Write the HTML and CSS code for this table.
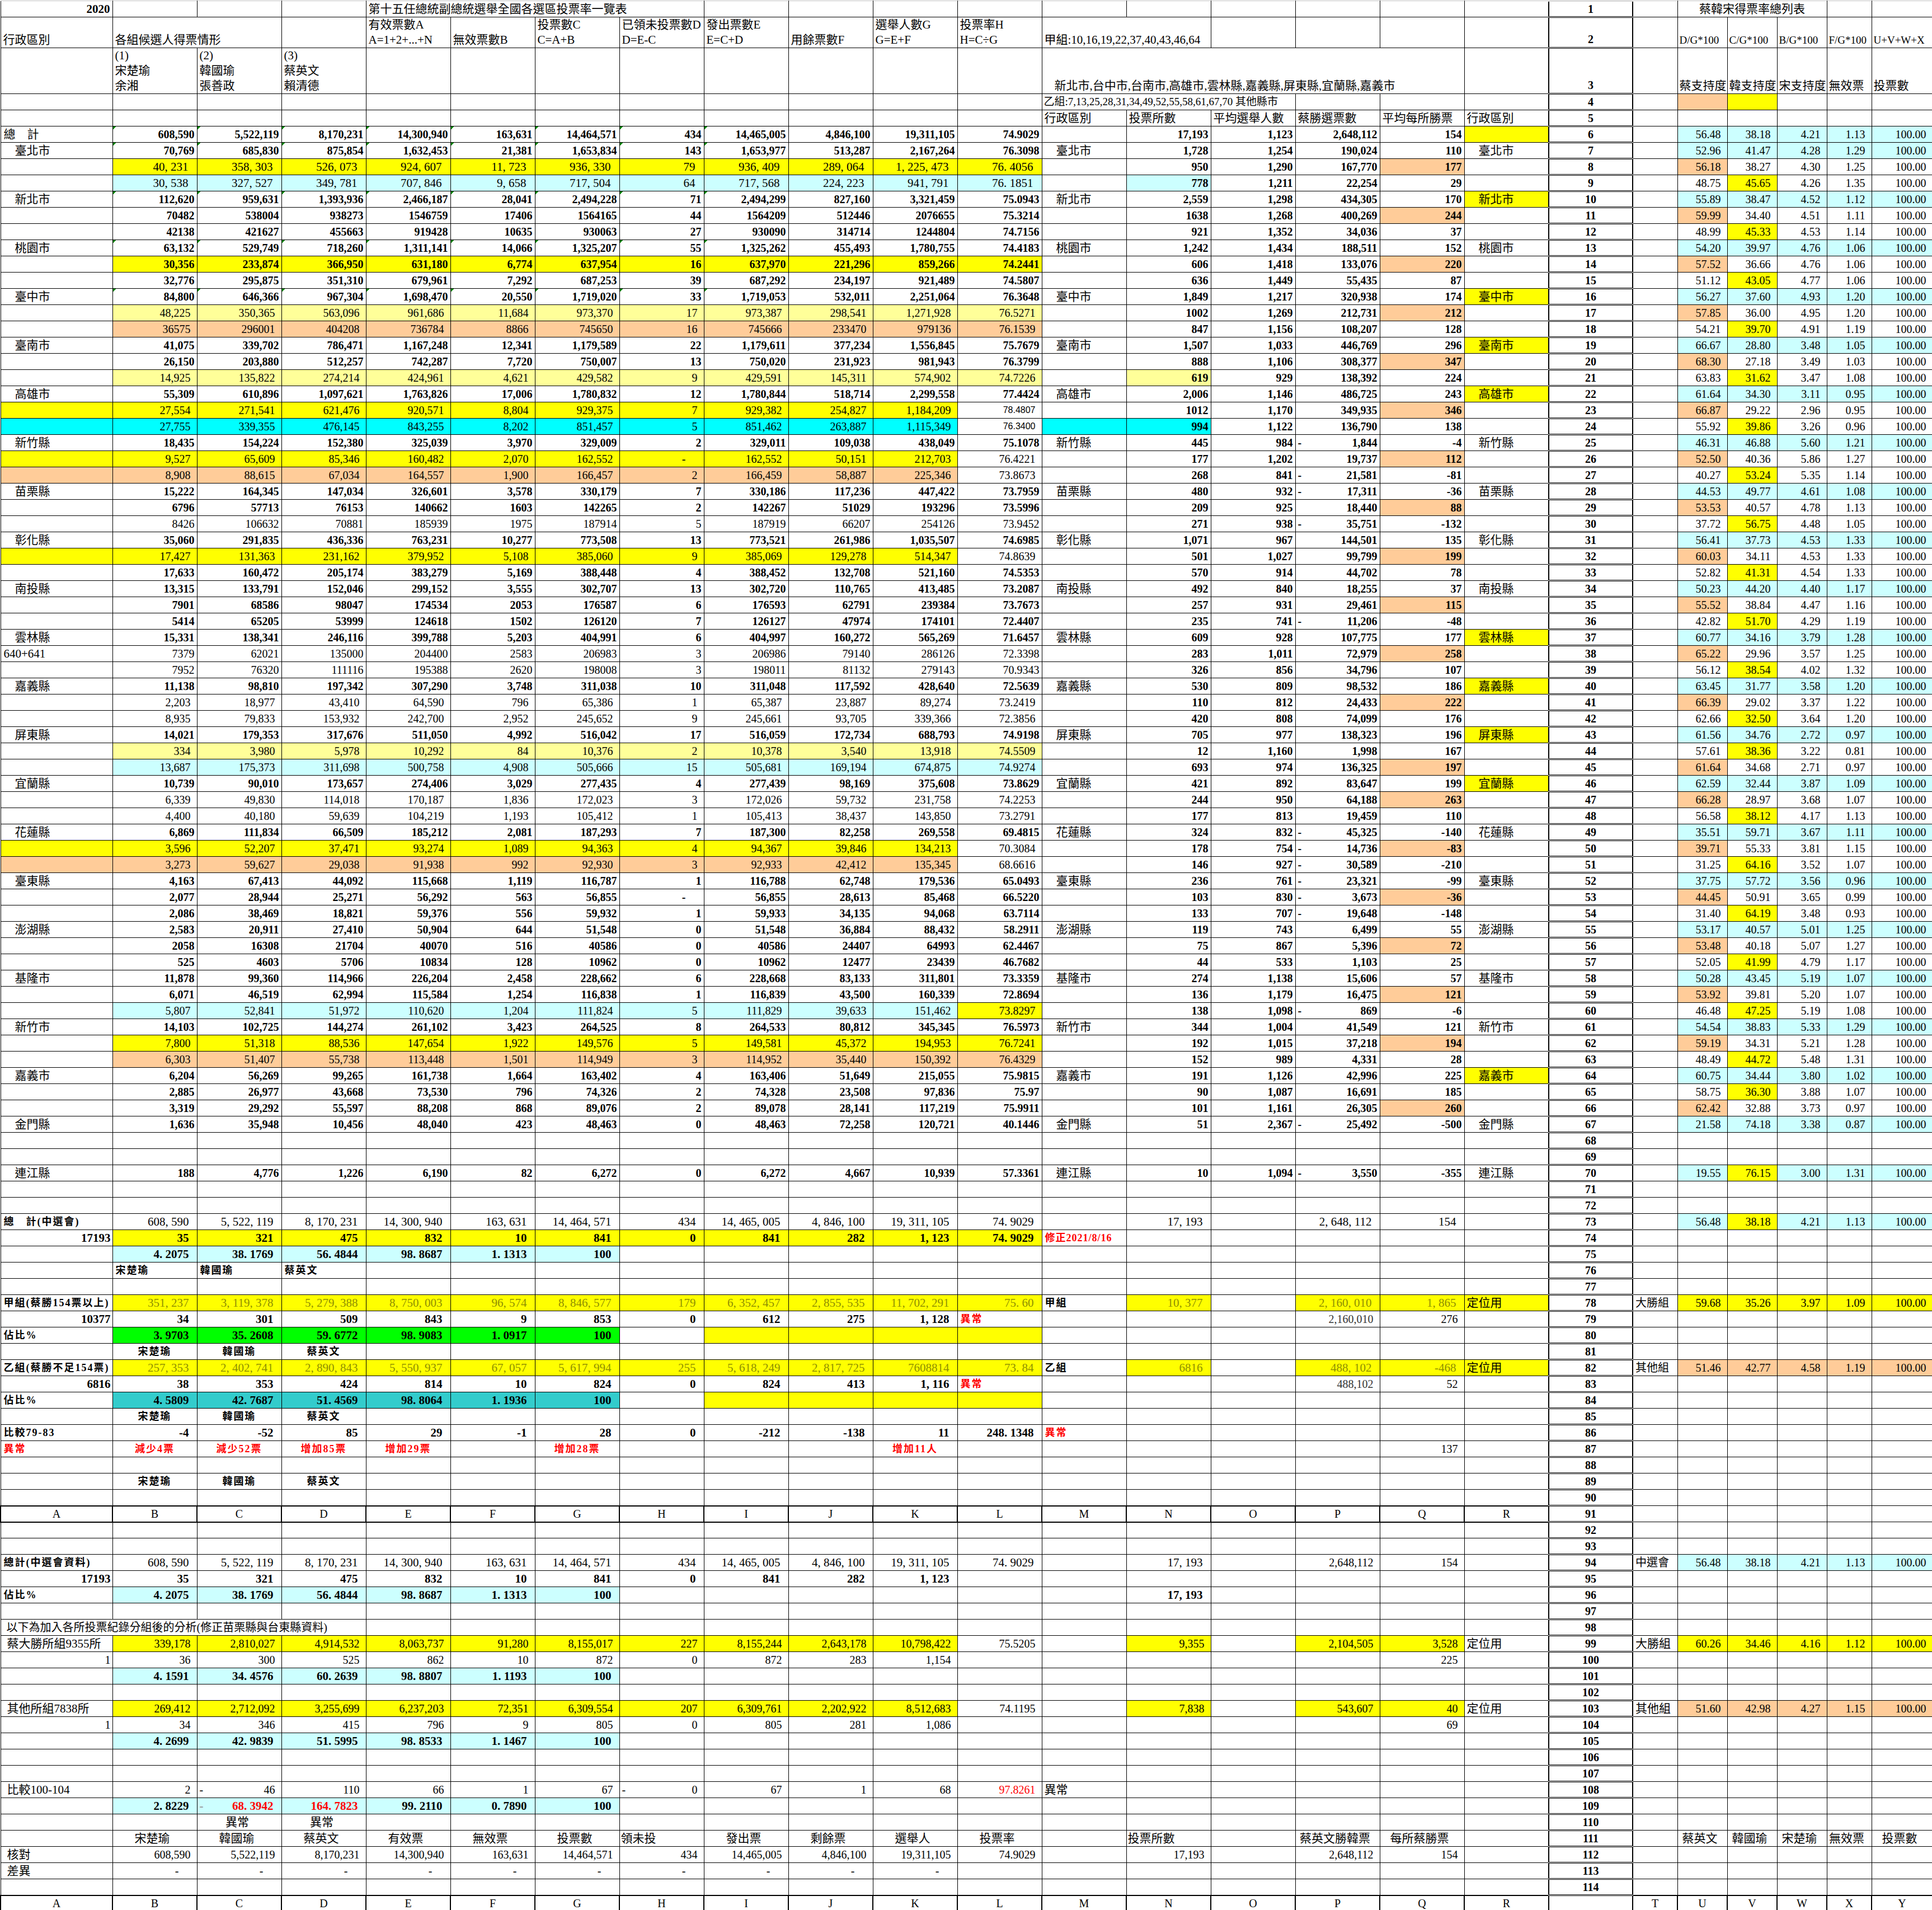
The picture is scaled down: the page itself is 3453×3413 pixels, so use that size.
FILE: index.html
```html
<!DOCTYPE html>
<html lang="zh-Hant">
<head>
<meta charset="utf-8">
<title>第十五任總統副總統選舉全國各選區投票率一覽表</title>
<link rel="stylesheet" href="styles.css">
</head>
<body>
<table class="sheet">
<colgroup><col class="w200"><col class="w151"><col class="w151"><col class="w151"><col class="w151"><col class="w151"><col class="w151"><col class="w151"><col class="w151"><col class="w151"><col class="w151"><col class="w151"><col class="w151"><col class="w151"><col class="w151"><col class="w151"><col class="w151"><col class="w151"><col class="w150"><col class="w80"><col class="w89"><col class="w89"><col class="w89"><col class="w80"><col class="w109"></colgroup>
<thead>
<tr class="r1"><td class="r b">2020<td><td><td><td colspan="4">第十五任總統副總統選舉全國各選區投票率一覽表<td><td><td><td><td><td><td><td><td><td><td class="rn">1<td><td colspan="3" class="ct">蔡韓宋得票率總列表<td><td>
<tr class="r2"><td>行政區別<td colspan="2">各組候選人得票情形<td><td>有效票數A<br>A=1+2+...+N<td>無效票數B<td>投票數C<br>C=A+B<td>已領未投票數D<br>D=E-C<td>發出票數E<br>E=C+D<td>用餘票數F<td>選舉人數G<br>G=E+F<td>投票率H<br>H=C÷G<td colspan="2">甲組:10,16,19,22,37,40,43,46,64<td><td><td><td><td class="rn">2<td><td class="sh">D/G*100<td class="sh">C/G*100<td class="sh">B/G*100<td class="sh">F/G*100<td class="sh">U+V+W+X
<tr class="r3"><td><td>(1)<br>宋楚瑜<br>余湘<td>(2)<br>韓國瑜<br>張善政<td>(3)<br>蔡英文<br>賴清德<td><td><td><td><td><td><td><td><td colspan="5" class="ind">新北市,台中市,台南市,高雄市,雲林縣,嘉義縣,屏東縣,宜蘭縣,嘉義市<td><td class="rn">3<td><td class="sh">蔡支持度<td class="sh">韓支持度<td class="sh">宋支持度<td class="sh">無效票<td class="sh">投票數
<tr><td><td><td><td><td><td><td><td><td><td><td><td><td colspan="3" class="g4">乙組:7,13,25,28,31,34,49,52,55,58,61,67,70 其他縣市<td><td><td><td class="rn">4<td><td class="o"><td class="y"><td><td><td>
</thead>
<tbody>
<tr class="hd5"><td><td><td><td><td><td><td><td><td><td><td><td><td>行政區別<td>投票所數<td>平均選舉人數<td>蔡勝選票數<td>平均每所勝票<td>行政區別<td class="rn">5<td><td><td><td><td><td>
<tr class="d b uc gt"><td class="ni">總　計<td>608,590<td>5,522,119<td>8,170,231<td>14,300,940<td>163,631<td>14,464,571<td>434<td>14,465,005<td>4,846,100<td>19,311,105<td>74.9029<td><td>17,193<td>1,123<td>2,648,112<td>154<td class="y"><td class="rn">6<td><td>56.48<td>38.18<td>4.21<td>1.13<td>100.00
<tr class="d b uc gt"><td>臺北市<td>70,769<td>685,830<td>875,854<td>1,632,453<td>21,381<td>1,653,834<td>143<td>1,653,977<td>513,287<td>2,167,264<td>76.3098<td>臺北市<td>1,728<td>1,254<td>190,024<td>110<td>臺北市<td class="rn">7<td><td>52.96<td>41.47<td>4.28<td>1.29<td>100.00
<tr class="d a8 bl fy uo"><td><td>40, 231<td>358, 303<td>526, 073<td>924, 607<td>11, 723<td>936, 330<td>79<td>936, 409<td>289, 064<td>1, 225, 473<td>76. 4056<td><td>950<td>1,290<td>167,770<td class="o">177<td><td class="rn">8<td><td>56.18<td>38.27<td>4.30<td>1.25<td>100.00
<tr class="d a8 bl fc vy"><td><td>30, 538<td>327, 527<td>349, 781<td>707, 846<td>9, 658<td>717, 504<td>64<td>717, 568<td>224, 223<td>941, 791<td>76. 1851<td><td class="c">778<td>1,211<td>22,254<td>29<td><td class="rn">9<td><td>48.75<td>45.65<td>4.26<td>1.35<td>100.00
<tr class="d b uc gt"><td>新北市<td>112,620<td>959,631<td>1,393,936<td>2,466,187<td>28,041<td>2,494,228<td>71<td>2,494,299<td>827,160<td>3,321,459<td>75.0943<td>新北市<td>2,559<td>1,298<td>434,305<td>170<td class="y">新北市<td class="rn">10<td><td>55.89<td>38.47<td>4.52<td>1.12<td>100.00
<tr class="d b uo"><td><td>70482<td>538004<td>938273<td>1546759<td>17406<td>1564165<td>44<td>1564209<td>512446<td>2076655<td>75.3214<td><td>1638<td>1,268<td>400,269<td class="o">244<td><td class="rn">11<td><td>59.99<td>34.40<td>4.51<td>1.11<td>100.00
<tr class="d b vy"><td><td>42138<td>421627<td>455663<td>919428<td>10635<td>930063<td>27<td>930090<td>314714<td>1244804<td>74.7156<td><td>921<td>1,352<td>34,036<td>37<td><td class="rn">12<td><td>48.99<td>45.33<td>4.53<td>1.14<td>100.00
<tr class="d b uc gt"><td>桃園市<td>63,132<td>529,749<td>718,260<td>1,311,141<td>14,066<td>1,325,207<td>55<td>1,325,262<td>455,493<td>1,780,755<td>74.4183<td>桃園市<td>1,242<td>1,434<td>188,511<td>152<td>桃園市<td class="rn">13<td><td>54.20<td>39.97<td>4.76<td>1.06<td>100.00
<tr class="d b bl fy uo"><td><td>30,356<td>233,874<td>366,950<td>631,180<td>6,774<td>637,954<td>16<td>637,970<td>221,296<td>859,266<td>74.2441<td><td>606<td>1,418<td>133,076<td class="o">220<td><td class="rn">14<td><td>57.52<td>36.66<td>4.76<td>1.06<td>100.00
<tr class="d b vy"><td><td>32,776<td>295,875<td>351,310<td>679,961<td>7,292<td>687,253<td>39<td>687,292<td>234,197<td>921,489<td>74.5807<td><td>636<td>1,449<td>55,435<td>87<td><td class="rn">15<td><td>51.12<td>43.05<td>4.77<td>1.06<td>100.00
<tr class="d b uc gt"><td>臺中市<td>84,800<td>646,366<td>967,304<td>1,698,470<td>20,550<td>1,719,020<td>33<td>1,719,053<td>532,011<td>2,251,064<td>76.3648<td>臺中市<td>1,849<td>1,217<td>320,938<td>174<td class="y">臺中市<td class="rn">16<td><td>56.27<td>37.60<td>4.93<td>1.20<td>100.00
<tr class="d ac bl fly uo"><td><td>48,225<td>350,365<td>563,096<td>961,686<td>11,684<td>973,370<td>17<td>973,387<td>298,541<td>1,271,928<td>76.5271<td><td>1002<td>1,269<td>212,731<td class="o">212<td><td class="rn">17<td><td>57.85<td>36.00<td>4.95<td>1.20<td>100.00
<tr class="d ac bl fo vy"><td><td>36575<td>296001<td>404208<td>736784<td>8866<td>745650<td>16<td>745666<td>233470<td>979136<td>76.1539<td><td>847<td>1,156<td>108,207<td>128<td><td class="rn">18<td><td>54.21<td>39.70<td>4.91<td>1.19<td>100.00
<tr class="d b uc"><td>臺南市<td>41,075<td>339,702<td>786,471<td>1,167,248<td>12,341<td>1,179,589<td>22<td>1,179,611<td>377,234<td>1,556,845<td>75.7679<td>臺南市<td>1,507<td>1,033<td>446,769<td>296<td class="y">臺南市<td class="rn">19<td><td>66.67<td>28.80<td>3.48<td>1.05<td>100.00
<tr class="d b uo"><td><td>26,150<td>203,880<td>512,257<td>742,287<td>7,720<td>750,007<td>13<td>750,020<td>231,923<td>981,943<td>76.3799<td><td>888<td>1,106<td>308,377<td class="o">347<td><td class="rn">20<td><td>68.30<td>27.18<td>3.49<td>1.03<td>100.00
<tr class="d ac bl fly vy"><td><td>14,925<td>135,822<td>274,214<td>424,961<td>4,621<td>429,582<td>9<td>429,591<td>145,311<td>574,902<td>74.7226<td><td class="ly">619<td>929<td>138,392<td>224<td><td class="rn">21<td><td>63.83<td>31.62<td>3.47<td>1.08<td>100.00
<tr class="d b uc"><td>高雄市<td>55,309<td>610,896<td>1,097,621<td>1,763,826<td>17,006<td>1,780,832<td>12<td>1,780,844<td>518,714<td>2,299,558<td>77.4424<td>高雄市<td>2,006<td>1,146<td>486,725<td>243<td class="y">高雄市<td class="rn">22<td><td>61.64<td>34.30<td>3.11<td>0.95<td>100.00
<tr class="d ac ak fy uo"><td><td>27,554<td>271,541<td>621,476<td>920,571<td>8,804<td>929,375<td>7<td>929,382<td>254,827<td>1,184,209<td class="sm">78.4807<td><td>1012<td>1,170<td>349,935<td class="o">346<td><td class="rn">23<td><td>66.87<td>29.22<td>2.96<td>0.95<td>100.00
<tr class="d ac ak fcy vy"><td><td>27,755<td>339,355<td>476,145<td>843,255<td>8,202<td>851,457<td>5<td>851,462<td>263,887<td>1,115,349<td class="sm">76.3400<td class="cy"><td class="cy">994<td>1,122<td>136,790<td>138<td><td class="rn">24<td><td>55.92<td>39.86<td>3.26<td>0.96<td>100.00
<tr class="d b uc"><td>新竹縣<td>18,435<td>154,224<td>152,380<td>325,039<td>3,970<td>329,009<td>2<td>329,011<td>109,038<td>438,049<td>75.1078<td>新竹縣<td>445<td>984<td><span class="mi">-</span>1,844<td>-4<td>新竹縣<td class="rn">25<td><td>46.31<td>46.88<td>5.60<td>1.21<td>100.00
<tr class="d ac ak fy uo"><td><td>9,527<td>65,609<td>85,346<td>160,482<td>2,070<td>162,552<td class="dz">-<td>162,552<td>50,151<td>212,703<td>76.4221<td><td>177<td>1,202<td>19,737<td class="o">112<td><td class="rn">26<td><td>52.50<td>40.36<td>5.86<td>1.27<td>100.00
<tr class="d ac ak fo vy"><td><td>8,908<td>88,615<td>67,034<td>164,557<td>1,900<td>166,457<td>2<td>166,459<td>58,887<td>225,346<td>73.8673<td><td>268<td>841<td><span class="mi">-</span>21,581<td>-81<td><td class="rn">27<td><td>40.27<td>53.24<td>5.35<td>1.14<td>100.00
<tr class="d b uc"><td>苗栗縣<td>15,222<td>164,345<td>147,034<td>326,601<td>3,578<td>330,179<td>7<td>330,186<td>117,236<td>447,422<td>73.7959<td>苗栗縣<td>480<td>932<td><span class="mi">-</span>17,311<td>-36<td>苗栗縣<td class="rn">28<td><td>44.53<td>49.77<td>4.61<td>1.08<td>100.00
<tr class="d b uo"><td><td>6796<td>57713<td>76153<td>140662<td>1603<td>142265<td>2<td>142267<td>51029<td>193296<td>73.5996<td><td>209<td>925<td>18,440<td class="o">88<td><td class="rn">29<td><td>53.53<td>40.57<td>4.78<td>1.13<td>100.00
<tr class="d vy"><td><td>8426<td>106632<td>70881<td>185939<td>1975<td>187914<td>5<td>187919<td>66207<td>254126<td>73.9452<td><td>271<td>938<td><span class="mi">-</span>35,751<td>-132<td><td class="rn">30<td><td>37.72<td>56.75<td>4.48<td>1.05<td>100.00
<tr class="d b uc"><td>彰化縣<td>35,060<td>291,835<td>436,336<td>763,231<td>10,277<td>773,508<td>13<td>773,521<td>261,986<td>1,035,507<td>74.6985<td>彰化縣<td>1,071<td>967<td>144,501<td>135<td>彰化縣<td class="rn">31<td><td>56.41<td>37.73<td>4.53<td>1.33<td>100.00
<tr class="d ac ak fy uo"><td><td>17,427<td>131,363<td>231,162<td>379,952<td>5,108<td>385,060<td>9<td>385,069<td>129,278<td>514,347<td>74.8639<td><td>501<td>1,027<td>99,799<td class="o">199<td><td class="rn">32<td><td>60.03<td>34.11<td>4.53<td>1.33<td>100.00
<tr class="d b vy"><td><td>17,633<td>160,472<td>205,174<td>383,279<td>5,169<td>388,448<td>4<td>388,452<td>132,708<td>521,160<td>74.5353<td><td>570<td>914<td>44,702<td>78<td><td class="rn">33<td><td>52.82<td>41.31<td>4.54<td>1.33<td>100.00
<tr class="d b uc"><td>南投縣<td>13,315<td>133,791<td>152,046<td>299,152<td>3,555<td>302,707<td>13<td>302,720<td>110,765<td>413,485<td>73.2087<td>南投縣<td>492<td>840<td>18,255<td>37<td>南投縣<td class="rn">34<td><td>50.23<td>44.20<td>4.40<td>1.17<td>100.00
<tr class="d b uo"><td><td>7901<td>68586<td>98047<td>174534<td>2053<td>176587<td>6<td>176593<td>62791<td>239384<td>73.7673<td><td>257<td>931<td>29,461<td class="o">115<td><td class="rn">35<td><td>55.52<td>38.84<td>4.47<td>1.16<td>100.00
<tr class="d b vy"><td><td>5414<td>65205<td>53999<td>124618<td>1502<td>126120<td>7<td>126127<td>47974<td>174101<td>72.4407<td><td>235<td>741<td><span class="mi">-</span>11,206<td>-48<td><td class="rn">36<td><td>42.82<td>51.70<td>4.29<td>1.19<td>100.00
<tr class="d b uc"><td>雲林縣<td>15,331<td>138,341<td>246,116<td>399,788<td>5,203<td>404,991<td>6<td>404,997<td>160,272<td>565,269<td>71.6457<td>雲林縣<td>609<td>928<td>107,775<td>177<td class="y">雲林縣<td class="rn">37<td><td>60.77<td>34.16<td>3.79<td>1.28<td>100.00
<tr class="d uo"><td class="ni">640+641<td>7379<td>62021<td>135000<td>204400<td>2583<td>206983<td>3<td>206986<td>79140<td>286126<td>72.3398<td><td>283<td>1,011<td>72,979<td class="o">258<td><td class="rn">38<td><td>65.22<td>29.96<td>3.57<td>1.25<td>100.00
<tr class="d vy"><td><td>7952<td>76320<td>111116<td>195388<td>2620<td>198008<td>3<td>198011<td>81132<td>279143<td>70.9343<td><td>326<td>856<td>34,796<td>107<td><td class="rn">39<td><td>56.12<td>38.54<td>4.02<td>1.32<td>100.00
<tr class="d b uc"><td>嘉義縣<td>11,138<td>98,810<td>197,342<td>307,290<td>3,748<td>311,038<td>10<td>311,048<td>117,592<td>428,640<td>72.5639<td>嘉義縣<td>530<td>809<td>98,532<td>186<td class="y">嘉義縣<td class="rn">40<td><td>63.45<td>31.77<td>3.58<td>1.20<td>100.00
<tr class="d ac uo gl"><td><td>2,203<td>18,977<td>43,410<td>64,590<td>796<td>65,386<td>1<td>65,387<td>23,887<td>89,274<td>73.2419<td><td>110<td>812<td>24,433<td class="o">222<td><td class="rn">41<td><td>66.39<td>29.02<td>3.37<td>1.22<td>100.00
<tr class="d ac vy gl"><td><td>8,935<td>79,833<td>153,932<td>242,700<td>2,952<td>245,652<td>9<td>245,661<td>93,705<td>339,366<td>72.3856<td><td>420<td>808<td>74,099<td>176<td><td class="rn">42<td><td>62.66<td>32.50<td>3.64<td>1.20<td>100.00
<tr class="d b uc"><td>屏東縣<td>14,021<td>179,353<td>317,676<td>511,050<td>4,992<td>516,042<td>17<td>516,059<td>172,734<td>688,793<td>74.9198<td>屏東縣<td>705<td>977<td>138,323<td>196<td class="y">屏東縣<td class="rn">43<td><td>61.56<td>34.76<td>2.72<td>0.97<td>100.00
<tr class="d ac bl fly vy"><td><td>334<td>3,980<td>5,978<td>10,292<td>84<td>10,376<td>2<td>10,378<td>3,540<td>13,918<td>74.5509<td><td>12<td>1,160<td>1,998<td>167<td><td class="rn">44<td><td>57.61<td>38.36<td>3.22<td>0.81<td>100.00
<tr class="d ac bl fc uo"><td><td>13,687<td>175,373<td>311,698<td>500,758<td>4,908<td>505,666<td>15<td>505,681<td>169,194<td>674,875<td>74.9274<td><td>693<td>974<td>136,325<td class="o">197<td><td class="rn">45<td><td>61.64<td>34.68<td>2.71<td>0.97<td>100.00
<tr class="d b uc"><td>宜蘭縣<td>10,739<td>90,010<td>173,657<td>274,406<td>3,029<td>277,435<td>4<td>277,439<td>98,169<td>375,608<td>73.8629<td>宜蘭縣<td>421<td>892<td>83,647<td>199<td class="y">宜蘭縣<td class="rn">46<td><td>62.59<td>32.44<td>3.87<td>1.09<td>100.00
<tr class="d ac uo"><td><td>6,339<td>49,830<td>114,018<td>170,187<td>1,836<td>172,023<td>3<td>172,026<td>59,732<td>231,758<td>74.2253<td><td>244<td>950<td>64,188<td class="o">263<td><td class="rn">47<td><td>66.28<td>28.97<td>3.68<td>1.07<td>100.00
<tr class="d ac vy"><td><td>4,400<td>40,180<td>59,639<td>104,219<td>1,193<td>105,412<td>1<td>105,413<td>38,437<td>143,850<td>73.2791<td><td>177<td>813<td>19,459<td>110<td><td class="rn">48<td><td>56.58<td>38.12<td>4.17<td>1.13<td>100.00
<tr class="d b uc"><td>花蓮縣<td>6,869<td>111,834<td>66,509<td>185,212<td>2,081<td>187,293<td>7<td>187,300<td>82,258<td>269,558<td>69.4815<td>花蓮縣<td>324<td>832<td><span class="mi">-</span>45,325<td>-140<td>花蓮縣<td class="rn">49<td><td>35.51<td>59.71<td>3.67<td>1.11<td>100.00
<tr class="d ac ak fy uo"><td><td>3,596<td>52,207<td>37,471<td>93,274<td>1,089<td>94,363<td>4<td>94,367<td>39,846<td>134,213<td>70.3084<td><td>178<td>754<td><span class="mi">-</span>14,736<td class="o">-83<td><td class="rn">50<td><td>39.71<td>55.33<td>3.81<td>1.15<td>100.00
<tr class="d ac ak fo vy"><td><td>3,273<td>59,627<td>29,038<td>91,938<td>992<td>92,930<td>3<td>92,933<td>42,412<td>135,345<td>68.6616<td><td>146<td>927<td><span class="mi">-</span>30,589<td>-210<td><td class="rn">51<td><td>31.25<td>64.16<td>3.52<td>1.07<td>100.00
<tr class="d b uc"><td>臺東縣<td>4,163<td>67,413<td>44,092<td>115,668<td>1,119<td>116,787<td>1<td>116,788<td>62,748<td>179,536<td>65.0493<td>臺東縣<td>236<td>761<td><span class="mi">-</span>23,321<td>-99<td>臺東縣<td class="rn">52<td><td>37.75<td>57.72<td>3.56<td>0.96<td>100.00
<tr class="d b uo"><td><td>2,077<td>28,944<td>25,271<td>56,292<td>563<td>56,855<td class="dz">-<td>56,855<td>28,613<td>85,468<td>66.5220<td><td>103<td>830<td><span class="mi">-</span>3,673<td class="o">-36<td><td class="rn">53<td><td>44.45<td>50.91<td>3.65<td>0.99<td>100.00
<tr class="d b vy"><td><td>2,086<td>38,469<td>18,821<td>59,376<td>556<td>59,932<td>1<td>59,933<td>34,135<td>94,068<td>63.7114<td><td>133<td>707<td><span class="mi">-</span>19,648<td>-148<td><td class="rn">54<td><td>31.40<td>64.19<td>3.48<td>0.93<td>100.00
<tr class="d b uc"><td>澎湖縣<td>2,583<td>20,911<td>27,410<td>50,904<td>644<td>51,548<td>0<td>51,548<td>36,884<td>88,432<td>58.2911<td>澎湖縣<td>119<td>743<td>6,499<td>55<td>澎湖縣<td class="rn">55<td><td>53.17<td>40.57<td>5.01<td>1.25<td>100.00
<tr class="d b uo"><td><td>2058<td>16308<td>21704<td>40070<td>516<td>40586<td>0<td>40586<td>24407<td>64993<td>62.4467<td><td>75<td>867<td>5,396<td class="o">72<td><td class="rn">56<td><td>53.48<td>40.18<td>5.07<td>1.27<td>100.00
<tr class="d b vy"><td><td>525<td>4603<td>5706<td>10834<td>128<td>10962<td>0<td>10962<td>12477<td>23439<td>46.7682<td><td>44<td>533<td>1,103<td>25<td><td class="rn">57<td><td>52.05<td>41.99<td>4.79<td>1.17<td>100.00
<tr class="d b uc"><td>基隆市<td>11,878<td>99,360<td>114,966<td>226,204<td>2,458<td>228,662<td>6<td>228,668<td>83,133<td>311,801<td>73.3359<td>基隆市<td>274<td>1,138<td>15,606<td>57<td>基隆市<td class="rn">58<td><td>50.28<td>43.45<td>5.19<td>1.07<td>100.00
<tr class="d b uo"><td><td>6,071<td>46,519<td>62,994<td>115,584<td>1,254<td>116,838<td>1<td>116,839<td>43,500<td>160,339<td>72.8694<td><td>136<td>1,179<td>16,475<td class="o">121<td><td class="rn">59<td><td>53.92<td>39.81<td>5.20<td>1.07<td>100.00
<tr class="d ac bk fc vy"><td><td>5,807<td>52,841<td>51,972<td>110,620<td>1,204<td>111,824<td>5<td>111,829<td>39,633<td>151,462<td class="y">73.8297<td><td>138<td>1,098<td><span class="mi">-</span>869<td>-6<td><td class="rn">60<td><td>46.48<td>47.25<td>5.19<td>1.08<td>100.00
<tr class="d b uc"><td>新竹市<td>14,103<td>102,725<td>144,274<td>261,102<td>3,423<td>264,525<td>8<td>264,533<td>80,812<td>345,345<td>76.5973<td>新竹市<td>344<td>1,004<td>41,549<td>121<td>新竹市<td class="rn">61<td><td>54.54<td>38.83<td>5.33<td>1.29<td>100.00
<tr class="d ac bl fy uo"><td><td>7,800<td>51,318<td>88,536<td>147,654<td>1,922<td>149,576<td>5<td>149,581<td>45,372<td>194,953<td>76.7241<td><td>192<td>1,015<td>37,218<td class="o">194<td><td class="rn">62<td><td>59.19<td>34.31<td>5.21<td>1.28<td>100.00
<tr class="d ac bl fo vy"><td><td>6,303<td>51,407<td>55,738<td>113,448<td>1,501<td>114,949<td>3<td>114,952<td>35,440<td>150,392<td>76.4329<td><td>152<td>989<td>4,331<td>28<td><td class="rn">63<td><td>48.49<td>44.72<td>5.48<td>1.31<td>100.00
<tr class="d b uc"><td>嘉義市<td>6,204<td>56,269<td>99,265<td>161,738<td>1,664<td>163,402<td>4<td>163,406<td>51,649<td>215,055<td>75.9815<td>嘉義市<td>191<td>1,126<td>42,996<td>225<td class="y">嘉義市<td class="rn">64<td><td>60.75<td>34.44<td>3.80<td>1.02<td>100.00
<tr class="d b vy"><td><td>2,885<td>26,977<td>43,668<td>73,530<td>796<td>74,326<td>2<td>74,328<td>23,508<td>97,836<td>75.97<td><td>90<td>1,087<td>16,691<td>185<td><td class="rn">65<td><td>58.75<td>36.30<td>3.88<td>1.07<td>100.00
<tr class="d b uo"><td><td>3,319<td>29,292<td>55,597<td>88,208<td>868<td>89,076<td>2<td>89,078<td>28,141<td>117,219<td>75.9911<td><td>101<td>1,161<td>26,305<td class="o">260<td><td class="rn">66<td><td>62.42<td>32.88<td>3.73<td>0.97<td>100.00
<tr class="d b uc"><td>金門縣<td>1,636<td>35,948<td>10,456<td>48,040<td>423<td>48,463<td>0<td>48,463<td>72,258<td>120,721<td>40.1446<td>金門縣<td>51<td>2,367<td><span class="mi">-</span>25,492<td>-500<td>金門縣<td class="rn">67<td><td>21.58<td>74.18<td>3.38<td>0.87<td>100.00
<tr><td><td><td><td><td><td><td><td><td><td><td><td><td><td><td><td><td><td><td class="rn">68<td><td><td><td><td><td>
<tr><td><td><td><td><td><td><td><td><td><td><td><td><td><td><td><td><td><td><td class="rn">69<td><td><td><td><td><td>
<tr class="d b uc vy"><td>連江縣<td>188<td>4,776<td>1,226<td>6,190<td>82<td>6,272<td>0<td>6,272<td>4,667<td>10,939<td>57.3361<td>連江縣<td>10<td>1,094<td><span class="mi">-</span>3,550<td>-355<td>連江縣<td class="rn">70<td><td>19.55<td>76.15<td>3.00<td>1.31<td>100.00
<tr><td><td><td><td><td><td><td><td><td><td><td><td><td><td><td><td><td><td><td class="rn">71<td><td><td><td><td><td>
<tr><td><td><td><td><td><td><td><td><td><td><td><td><td><td><td><td><td><td><td class="rn">72<td><td><td><td><td><td>
<tr class="m nw uc vy"><td class="lb">總　計(中選會)<td>608, 590<td>5, 522, 119<td>8, 170, 231<td>14, 300, 940<td>163, 631<td>14, 464, 571<td>434<td>14, 465, 005<td>4, 846, 100<td>19, 311, 105<td>74. 9029<td><td>17, 193<td><td>2, 648, 112<td>154<td><td class="rn">73<td><td>56.48<td>38.18<td>4.21<td>1.13<td>100.00
<tr class="m bl fy"><td class="r">17193<td>35<td>321<td>475<td>832<td>10<td>841<td>0<td>841<td>282<td>1, 123<td>74. 9029<td class="lb rd tight">修正2021/8/16<td><td><td><td><td><td class="rn">74<td><td><td><td><td><td>
<tr class="m bg fc"><td><td>4. 2075<td>38. 1769<td>56. 4844<td>98. 8687<td>1. 1313<td>100<td><td><td><td><td><td><td><td><td><td><td><td class="rn">75<td><td><td><td><td><td>
<tr class="m"><td><td class="lb">宋楚瑜<td class="lb">韓國瑜<td class="lb">蔡英文<td><td><td><td><td><td><td><td><td><td><td><td><td><td><td class="rn">76<td><td><td><td><td><td>
<tr><td><td><td><td><td><td><td><td><td><td><td><td><td><td><td><td><td><td><td class="rn">77<td><td><td><td><td><td>
<tr class="m bl fy ol uy"><td class="lb">甲組(蔡勝154票以上)<td>351, 237<td>3, 119, 378<td>5, 279, 388<td>8, 750, 003<td>96, 574<td>8, 846, 577<td>179<td>6, 352, 457<td>2, 855, 535<td>11, 702, 291<td>75. 60<td class="lb">甲組<td class="y">10, 377<td><td class="y">2, 160, 010<td class="y">1, 865<td class="y cj">定位用<td class="rn">78<td class="cj">大勝組<td>59.68<td>35.26<td>3.97<td>1.09<td>100.00
<tr class="m"><td class="r">10377<td>34<td>301<td>509<td>843<td>9<td>853<td>0<td>612<td>275<td>1, 128<td class="lb rd">異常<td><td><td><td class="rg gy">2,160,010<td class="rg">276<td><td class="rn">79<td><td><td><td><td><td>
<tr class="m bg fg il"><td class="lb">佔比%<td>3. 9703<td>35. 2608<td>59. 6772<td>98. 9083<td>1. 0917<td>100<td><td><td><td><td><td><td><td><td><td><td><td class="rn">80<td><td><td><td><td><td>
<tr class="m"><td><td class="cb">宋楚瑜<td class="cb">韓國瑜<td class="cb">蔡英文<td><td><td><td><td><td><td><td><td><td><td><td><td><td><td class="rn">81<td><td><td><td><td><td>
<tr class="m bl fy ol uor"><td class="lb">乙組(蔡勝不足154票)<td>257, 353<td>2, 402, 741<td>2, 890, 843<td>5, 550, 937<td>67, 057<td>5, 617, 994<td>255<td>5, 618, 249<td>2, 817, 725<td>7608814<td>73. 84<td class="lb">乙組<td class="y">6816<td><td class="y">488, 102<td class="y">-468<td class="y cj">定位用<td class="rn">82<td class="cj">其他組<td>51.46<td>42.77<td>4.58<td>1.19<td>100.00
<tr class="m"><td class="r">6816<td>38<td>353<td>424<td>814<td>10<td>824<td>0<td>824<td>413<td>1, 116<td class="lb rd">異常<td><td><td><td class="rg gy">488,102<td class="rg">52<td><td class="rn">83<td><td><td><td><td><td>
<tr class="m bg ft il"><td class="lb">佔比%<td>4. 5809<td>42. 7687<td>51. 4569<td>98. 8064<td>1. 1936<td>100<td><td><td><td><td><td><td><td><td><td><td><td class="rn">84<td><td><td><td><td><td>
<tr class="m"><td><td class="cb">宋楚瑜<td class="cb">韓國瑜<td class="cb">蔡英文<td><td><td><td><td><td><td><td><td><td><td><td><td><td><td class="rn">85<td><td><td><td><td><td>
<tr class="m"><td class="lb">比較79-83<td>-4<td>-52<td>85<td>29<td>-1<td>28<td>0<td>-212<td>-138<td>11<td>248. 1348<td class="lb rd">異常<td><td><td><td><td><td class="rn">86<td><td><td><td><td><td>
<tr class="m"><td class="lb rd">異常<td class="cb rd">減少4票<td class="cb rd">減少52票<td class="cb rd">增加85票<td class="cb rd">增加29票<td><td class="cb rd">增加28票<td><td><td><td class="cb rd">增加11人<td><td><td><td><td><td class="rg">137<td><td class="rn">87<td><td><td><td><td><td>
<tr><td><td><td><td><td><td><td><td><td><td><td><td><td><td><td><td><td><td><td class="rn">88<td><td><td><td><td><td>
<tr class="m"><td><td class="cb">宋楚瑜<td class="cb">韓國瑜<td class="cb">蔡英文<td><td><td><td><td><td><td><td><td><td><td><td><td><td><td class="rn">89<td><td><td><td><td><td>
<tr><td><td><td><td><td><td><td><td><td><td><td><td><td><td><td><td><td><td><td class="rn">90<td><td><td><td><td><td>
<tr class="hl part"><td>A<td>B<td>C<td>D<td>E<td>F<td>G<td>H<td>I<td>J<td>K<td>L<td>M<td>N<td>O<td>P<td>Q<td>R<td class="rn">91<td><td><td><td><td><td>
<tr><td><td><td><td><td><td><td><td><td><td><td><td><td><td><td><td><td><td><td class="rn">92<td><td><td><td><td><td>
<tr><td><td><td><td><td><td><td><td><td><td><td><td><td><td><td><td><td><td><td class="rn">93<td><td><td><td><td><td>
<tr class="m nw uc"><td class="lb">總計(中選會資料)<td>608, 590<td>5, 522, 119<td>8, 170, 231<td>14, 300, 940<td>163, 631<td>14, 464, 571<td>434<td>14, 465, 005<td>4, 846, 100<td>19, 311, 105<td>74. 9029<td><td>17, 193<td><td class="rg">2,648,112<td class="rg">154<td><td class="rn">94<td class="cj">中選會<td>56.48<td>38.18<td>4.21<td>1.13<td>100.00
<tr class="m"><td class="r">17193<td>35<td>321<td>475<td>832<td>10<td>841<td>0<td>841<td>282<td>1, 123<td><td><td><td><td><td><td><td class="rn">95<td><td><td><td><td><td>
<tr class="m bg fc"><td class="lb">佔比%<td>4. 2075<td>38. 1769<td>56. 4844<td>98. 8687<td>1. 1313<td>100<td><td><td><td><td><td><td>17, 193<td><td><td><td><td class="rn">96<td><td><td><td><td><td>
<tr><td><td><td><td><td><td><td><td><td><td><td><td><td><td><td><td><td><td><td class="rn">97<td><td><td><td><td><td>
<tr><td colspan="4" class="long">以下為加入各所投票紀錄分組後的分析(修正苗栗縣與台東縣資料)<td><td><td><td><td><td><td><td><td><td><td><td><td><td><td class="rn">98<td><td><td><td><td><td>
<tr class="n bk fy uy"><td class="lb2">蔡大勝所組9355所<td>339,178<td>2,810,027<td>4,914,532<td>8,063,737<td>91,280<td>8,155,017<td>227<td>8,155,244<td>2,643,178<td>10,798,422<td>75.5205<td><td class="y">9,355<td><td class="y">2,104,505<td class="y">3,528<td class="cj">定位用<td class="rn">99<td class="cj">大勝組<td>60.26<td>34.46<td>4.16<td>1.12<td>100.00
<tr class="n"><td class="r">1<td>36<td>300<td>525<td>862<td>10<td>872<td>0<td>872<td>283<td>1,154<td><td><td><td><td><td>225<td><td class="rn">100<td><td><td><td><td><td>
<tr class="m bg fc"><td><td>4. 1591<td>34. 4576<td>60. 2639<td>98. 8807<td>1. 1193<td>100<td><td><td><td><td><td><td><td><td><td><td><td class="rn">101<td><td><td><td><td><td>
<tr><td><td><td><td><td><td><td><td><td><td><td><td><td><td><td><td><td><td><td class="rn">102<td><td><td><td><td><td>
<tr class="n bk fy uor"><td class="lb2">其他所組7838所<td>269,412<td>2,712,092<td>3,255,699<td>6,237,203<td>72,351<td>6,309,554<td>207<td>6,309,761<td>2,202,922<td>8,512,683<td>74.1195<td><td class="y">7,838<td><td class="y">543,607<td class="y">40<td class="cj">定位用<td class="rn">103<td class="cj">其他組<td>51.60<td>42.98<td>4.27<td>1.15<td>100.00
<tr class="n"><td class="r">1<td>34<td>346<td>415<td>796<td>9<td>805<td>0<td>805<td>281<td>1,086<td><td><td><td><td><td>69<td><td class="rn">104<td><td><td><td><td><td>
<tr class="m bg fc"><td><td>4. 2699<td>42. 9839<td>51. 5995<td>98. 8533<td>1. 1467<td>100<td><td><td><td><td><td><td><td><td><td><td><td class="rn">105<td><td><td><td><td><td>
<tr><td><td><td><td><td><td><td><td><td><td><td><td><td><td><td><td><td><td><td class="rn">106<td><td><td><td><td><td>
<tr><td><td><td><td><td><td><td><td><td><td><td><td><td><td><td><td><td><td><td class="rn">107<td><td><td><td><td><td>
<tr class="n"><td class="lb2">比較100-104<td>2<td><span class="mi">-</span>46<td>110<td>66<td>1<td>67<td><span class="mi">-</span>0<td>67<td>1<td>68<td class="rd">97.8261<td class="cj">異常<td><td><td><td><td><td class="rn">108<td><td><td><td><td><td>
<tr class="m bg fc"><td><td>2. 8229<td class="rd"><span class="mi gy">-</span>68. 3942<td class="rd">164. 7823<td>99. 2110<td>0. 7890<td>100<td><td><td><td><td><td><td><td><td><td><td><td class="rn">109<td><td><td><td><td><td>
<tr class="n"><td><td><td class="cj ct">異常<td class="cj ct">異常<td><td><td><td><td><td><td><td><td><td><td><td><td><td><td class="rn">110<td><td><td><td><td><td>
<tr class="n ctr"><td><td>宋楚瑜<td>韓國瑜<td>蔡英文<td>有效票<td>無效票<td>投票數<td class="lf">領未投<td>發出票<td>剩餘票<td>選舉人<td>投票率<td><td class="lf">投票所數<td><td>蔡英文勝韓票<td>每所蔡勝票<td><td class="rn">111<td><td>蔡英文<td>韓國瑜<td>宋楚瑜<td>無效票<td>投票數
<tr class="n"><td class="lb2">核對<td>608,590<td>5,522,119<td>8,170,231<td>14,300,940<td>163,631<td>14,464,571<td>434<td>14,465,005<td>4,846,100<td>19,311,105<td>74.9029<td><td>17,193<td><td>2,648,112<td>154<td><td class="rn">112<td><td><td><td><td><td>
<tr class="n"><td class="lb2">差異<td class="dz">-<td class="dz">-<td class="dz">-<td class="dz">-<td class="dz">-<td class="dz">-<td class="dz">-<td class="dz">-<td class="dz">-<td class="dz">-<td><td><td><td><td><td><td><td class="rn">113<td><td><td><td><td><td>
<tr><td><td><td><td><td><td><td><td><td><td><td><td><td><td><td><td><td><td><td class="rn">114<td><td><td><td><td><td>
<tr class="hl"><td>A<td>B<td>C<td>D<td>E<td>F<td>G<td>H<td>I<td>J<td>K<td>L<td>M<td>N<td>O<td>P<td>Q<td>R<td class="rn"><td>T<td>U<td>V<td>W<td>X<td>Y
</tbody>
</table>
</body>
</html>
```

FILE: styles.css
```css
html, body {
  margin: 0;
  padding: 0;
  background: #fff;
}

.sheet {
  border-collapse: collapse;
  table-layout: fixed;
  width: 3453px;
}

.w200 { width: 200px; }
.w151 { width: 151px; }
.w150 { width: 150px; }
.w80 { width: 80px; }
.w89 { width: 89px; }
.w109 { width: 109px; }

.sheet tr { height: 29px; }
.sheet tr.r2 { height: 55px; }
.sheet tr.r3 { height: 82px; }

td {
  border: 1px solid #000;
  padding: 0 4px;
  font: 400 20px/22px "Liberation Serif", "Noto Sans CJK TC", serif;
  color: #000;
  text-align: right;
  vertical-align: middle;
  white-space: nowrap;
  overflow: hidden;
}

/* header block */
thead td { text-align: left; font-size: 21px; }
thead tr.r1 td { border-top-color: #c4c4c4; }
thead tr.r2 td, thead tr.r3 td { vertical-align: bottom; line-height: 27px; }
thead td.sh { padding: 0 0 0 3px; }
thead tr.r2 td.sh { font-size: 19px; }
thead td.ind { padding-left: 22px; }
thead td.g4 { font-size: 19px; padding: 0 0 0 3px; }

/* column alignment in the body */
tbody td:nth-child(1),
tbody td:nth-child(13),
tbody td:nth-child(18),
tbody td:nth-child(20) { text-align: left; }

/* county rows */
.d td:nth-child(1),
.d td:nth-child(13),
.d td:nth-child(18) { padding-left: 25px; font-size: 21px; }
.b td { font-weight: 700; }
.d td:nth-child(1),
.d td:nth-child(13),
.d td:nth-child(18),
.d td:nth-child(n+20) { font-weight: 400; }
.d td:nth-child(n+14):nth-child(-n+17) { font-weight: 700; }
.d td:nth-child(n+21) { padding-right: 11px; }
.d td.ni { padding-left: 5px; }
.ac td:nth-child(n+2):nth-child(-n+12) { padding-right: 11px; }
.a8 td:nth-child(n+2):nth-child(-n+12) { padding-right: 15px; font-size: 21px; }
.gl td:nth-child(n+3):nth-child(-n+7) { border-left-color: #b8b8b8; }
.gt td:nth-child(n+2):nth-child(-n+9) {
  background-image: linear-gradient(135deg, #008a00 0 4px, transparent 4px);
  background-repeat: no-repeat;
}

/* fills */
.fy { --f: #ffff00; }
.fly { --f: #ffff99; }
.fo { --f: #ffcc99; }
.fc { --f: #ccffff; }
.fcy { --f: #00ffff; }
.fg { --f: #00ff00; }
.ft { --f: #33cccc; }
.bl td:nth-child(n+2):nth-child(-n+12),
.bk td:nth-child(n+2):nth-child(-n+11),
.bg td:nth-child(n+2):nth-child(-n+7),
.ak td:nth-child(-n+11) { background-color: var(--f); }
.il td:nth-child(n+9):nth-child(-n+12) { background-color: #ffff00; }
.uc td:nth-child(n+21) { background-color: #ccffff; }
.uy td:nth-child(n+21) { background-color: #ffff00; }
.uor td:nth-child(n+21) { background-color: #ffcc99; }
.uo td:nth-child(21) { background-color: #ffcc99; }
.vy td:nth-child(22) { background-color: #ffff00; }
td.y { background-color: #ffff00; }
td.ly { background-color: #ffff99; }
td.o { background-color: #ffcc99; }
td.c { background-color: #ccffff; }
td.cy { background-color: #00ffff; }

/* summary block */
.m td { font-weight: 700; font-size: 21px; padding-right: 14px; }
.m td:nth-child(1) { padding-right: 3px; }
.m td:nth-child(n+20) { font-weight: 400; font-size: 20px; padding-right: 11px; }
.nw td { font-weight: 400; }
.ol td:nth-child(n+2):nth-child(-n+12),
.ol td:nth-child(14),
.ol td:nth-child(16),
.ol td:nth-child(17) { color: #8f8f00; font-weight: 400; }
.n td:nth-child(n+2):nth-child(-n+17) { padding-right: 11px; }
.n td:nth-child(n+21) { padding-right: 11px; }
.n td:nth-child(1) { padding-right: 3px; }
.hd5 td { text-align: left; font-size: 21px; }
.ctr td { text-align: center; font-size: 21px; padding: 0 2px; }

td.lb {
  font-weight: 700;
  font-size: 18px;
  letter-spacing: 2px;
  text-align: left;
  padding-left: 5px;
}
td.tight { letter-spacing: 1px; }
td.cb {
  font-weight: 700;
  font-size: 18px;
  letter-spacing: 2px;
  text-align: center;
  padding: 0 2px;
}
td.rd { color: #ff0000; }
td.cj { font-weight: 400; font-size: 21px; }
td.lb2 { font-weight: 400; font-size: 21px; padding-left: 11px; }
td.rg { font-weight: 400; font-size: 20px; padding-right: 11px; }
td.gy { color: #333; }
td.lf { text-align: left; }
td.ct { text-align: center; }
td.r, tbody td.r { text-align: right; }
td.b { font-weight: 700; }
td.dz { padding-right: 32px !important; }
td.sm { font: 400 16px/22px "Liberation Sans", sans-serif; }
td.long { text-align: left; font-size: 20px; padding-left: 10px; }
span.mi { float: left; }
span.gy { color: #999; }

/* row number column */
td.rn {
  font-weight: 700;
  font-size: 20px;
  text-align: center;
  padding: 0;
  border-top: 3px double #000;
  border-bottom: 3px double #000;
  border-left: 2px solid #000;
  border-right: 2px solid #000;
}

/* column letter rows */
tbody tr.hl td {
  text-align: center;
  border: 2px solid #000;
  font-weight: 400;
  padding: 0;
}
tbody tr.hl td.rn { font-weight: 700; }
tbody tr.hl.part td:nth-child(n+20) { border: 1px solid #000; }
```
